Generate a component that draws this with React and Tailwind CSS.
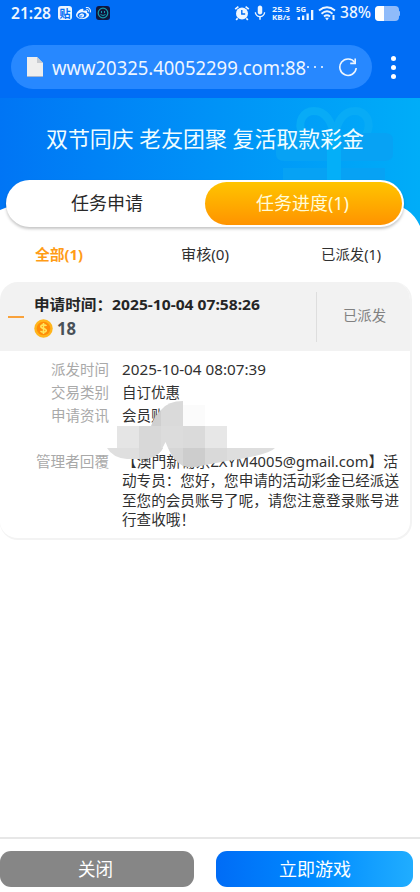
import { FaWeibo } from "react-icons/fa";
import { MdMic } from "react-icons/md";

const details = [
  { label: "派发时间", value: "2025-10-04 08:07:39", width: 144 },
  { label: "交易类别", value: "自订优惠", width: 58 },
  { label: "申请资讯", value: "会员账号", width: 58 },
];

const replyLines = [
  { text: "【澳門新葡京ZXYM4005@gmail.com】活", width: 276 },
  { text: "动专员：您好，您申请的活动彩金已经派送", width: 277 },
  { text: "至您的会员账号了呢，请您注意登录账号进", width: 277 },
  { text: "行查收哦！", width: 73 },
];

// One line of text, stretched or squeezed to a fixed width
function Line({ children, width, size, height = size * 1.4, className = "" }) {
  return (
    <svg width={width} height={height} className={`block shrink-0 overflow-visible ${className}`}>
      <text
        x="0"
        y={height / 2 + size * 0.36}
        textLength={width}
        lengthAdjust="spacingAndGlyphs"
        fontSize={size}
        fill="currentColor"
      >
        {children}
      </text>
    </svg>
  );
}

function StatusBar() {
  return (
    <div className="flex h-[26px] items-center pl-[11px] pr-5">
      <Line width={40} size={16.5} className="font-semibold">21:28</Line>
      <span className="ml-[7px] flex h-[14px] w-[14px] items-center justify-center rounded-[3px] bg-[#eaf5ff] text-[11px] font-bold leading-none text-[#006df5]">
        贴
      </span>
      <FaWeibo className="ml-[4px] h-[15px] w-[15px]" />
      <svg viewBox="0 0 14 14" className="ml-[5px] h-[14px] w-[14px]">
        <rect width="14" height="14" rx="3" fill="#10163d" />
        <circle cx="7" cy="7" r="4.8" fill="none" stroke="#159eac" strokeWidth="1.2" />
        <path d="M5.5 5v2M8.5 5v2M4.5 8.5q2.5 2 5 0" fill="none" stroke="#159eac" />
      </svg>

      <svg viewBox="0 0 16 16" className="ml-auto h-4 w-4">
        <circle cx="8" cy="8.5" r="6" fill="currentColor" />
        <path d="M1.2 4.2L4.4 1.6M14.8 4.2L11.6 1.6M3.6 13.2L2.2 15M12.4 13.2l1.4 1.8" stroke="currentColor" strokeWidth="1.7" />
        <path d="M7.8 5v4h3.4" fill="none" stroke="#006df5" strokeWidth="1.4" />
      </svg>
      <MdMic className="ml-px h-[18px] w-[18px]" />
      <div className="ml-[3px] flex flex-col">
        <Line width={18} size={7.6} height={8.5} className="font-bold">25.3</Line>
        <Line width={18} size={7.6} height={8.5} className="font-bold">KB/s</Line>
      </div>
      <svg viewBox="0 0 18 16" className="ml-[6px] h-4 w-[18px]" fill="currentColor">
        <text x="0" y="6.5" fontSize="7.5" fontWeight="700" textLength="10" lengthAdjust="spacingAndGlyphs">5G</text>
        <path d="M1.5 12H4v3H1.5zM6 10.5h2.3V15H6zM10.5 8.5h2.3V15h-2.3zM15 5h2.3v10H15z" />
      </svg>
      <svg viewBox="0 0 18 16" className="ml-[4px] h-4 w-[18px]" fill="none" stroke="currentColor" strokeWidth="1.9">
        <path d="M1 5.5Q9-1 17 5.5M3.5 8.7Q9 4 14.5 8.7M6 11.5q3-2.4 6 0" />
        <path d="M7 12.8h4L9 15.5z" fill="currentColor" stroke="none" />
        <path d="M15.5 10v5" strokeWidth="2" />
      </svg>
      <Line width={31} size={15.5} className="ml-[4px] font-medium">38%</Line>
      <span className="ml-[4px] flex h-[15px] w-[24px] overflow-hidden rounded-[4px] bg-[#8fbbfa]">
        <span className="h-full w-[9px] bg-white" />
      </span>
      <span className="h-[5px] w-px rounded-r bg-[#8fbbfa]" />
    </div>
  );
}

function AddressBar() {
  return (
    <div className="mt-[19px] flex items-center pl-[11px]">
      <div className="flex h-[44px] w-[361px] items-center rounded-full bg-[#2788ff] pl-[16px]">
        <svg viewBox="0 0 16 20" className="h-5 w-4">
          <path d="M0 0h10l6 6v14H0z" fill="#eeeeee" />
          <path d="M10 0v6h6z" fill="#c8cbd0" />
          <path d="M0 19.5h16" stroke="#a6b6d0" />
        </svg>
        <Line width={254} size={20} height={26} className="ml-[9px] mt-px">www20325.40052299.com:88</Line>
        <span className="ml-[1px] flex w-[16px] justify-between">
          <i className="h-[2px] w-[2px] rounded-full bg-white" />
          <i className="h-[2px] w-[2px] rounded-full bg-white" />
          <i className="h-[2px] w-[2px] rounded-full bg-white" />
        </span>
        <svg viewBox="0 0 20 20" className="ml-[15px] h-5 w-5" fill="none" stroke="currentColor" strokeWidth="1.6">
          <path d="M16.8 5.6A8.2 8.2 0 1 0 18.2 11" />
          <path d="M17.2 1.4v5h-5" />
        </svg>
      </div>
      <div className="ml-[19px] flex flex-col gap-[4px]">
        <i className="h-[5px] w-[5px] rounded-full bg-white" />
        <i className="h-[5px] w-[5px] rounded-full bg-white" />
        <i className="h-[5px] w-[5px] rounded-full bg-white" />
      </div>
    </div>
  );
}

// Faint present behind the headline
function Gift() {
  return (
    <svg viewBox="0 0 118 84" className="absolute left-[276px] top-[9px] h-[84px] w-[118px]">
      <g fill="none" stroke="#08abf6" strokeWidth="8">
        <path d="M27 28C20 14 28 4 38 4c11 0 18 10 20 24" />
        <path d="M90 28C97 14 89 4 79 4 68 4 61 14 59 28" />
      </g>
      <g fill="#07a2f4">
        <path d="M8 26h101q8 0 8 7v14q0 7-8 7H8q-8 0-8-7V33q0-7 8-7z" />
        <path d="M7 61h102v23H7z" />
      </g>
      <path d="M51 26h14v58H51z" fill="#04aff8" />
    </svg>
  );
}

function Coin() {
  return (
    <svg viewBox="0 0 20 20" className="h-[19px] w-[19px]">
      <circle cx="10" cy="10" r="9.7" fill="#ffb51b" />
      <circle cx="10" cy="10" r="7.2" fill="#ff8d08" />
      <path d="M13 7.4C12.5 5.8 7.4 5.5 7.2 8c-.2 2.4 5.8 1.5 5.7 4.1-.2 2.5-5.4 2.2-5.9.4M10 4.2v11.6" fill="none" stroke="#ffe65d" strokeWidth="1.7" />
    </svg>
  );
}

// Blurred-out blocks that hide the account name
function Mosaic() {
  return (
    <svg viewBox="0 0 170 70" className="absolute left-[107px] top-[119px] h-[70px] w-[170px]">
      <path d="M76 4H98V25H76z" fill="#fbfbfb" />
      <path d="M44 25Q48 14 54 9V25z" fill="#cfcfcf" />
      <path d="M54 9Q61 0 76 0V25H54z" fill="#dadada" />
      <path d="M10 25H32V47H10z" fill="#e5e5e5" />
      <path d="M32 25H54V47H32z" fill="#d8d8d8" />
      <path d="M54 25H76V47H61L58.5 41L55 48H54z" fill="#dcdcdc" />
      <path d="M76 25H98V47H76z" fill="#dadada" />
      <path d="M98 25H120V47H98z" fill="#e7e7e7" />
      <path d="M0 47H56Q50 58 34 58H20Q6 57 0 47z" fill="#dfdfdf" />
      <path d="M32 47H56Q50 58 34 58H32z" fill="#d8d8d8" />
      <path d="M61 47H76V65Q66 59 61 47z" fill="#d6d6d6" />
      <path d="M76 47H98V64Q85 68 76 65z" fill="#cdcdcd" />
      <path d="M98 47H120V60L98 64z" fill="#d9d9d9" />
      <path d="M120 47H168Q162 54 120 60z" fill="#dedede" />
    </svg>
  );
}

export default function App() {
  return (
    <div className="flex h-[892px] w-[420px] flex-col overflow-hidden bg-white font-['Noto_Sans','Noto_Sans_CJK_SC',sans-serif]">
      <header className="h-[98px] shrink-0 bg-[#006df5] text-[#eef6ff]">
        <StatusBar />
        <AddressBar />
      </header>

      {/* Banner */}
      <section className="relative h-[141px] shrink-0 bg-linear-to-r from-[#0075f5] to-[#00adf8]">
        <Gift />
        <svg viewBox="0 0 420 43" className="absolute left-0 top-[98px] h-[43px] w-[420px]">
          <path d="M0 14Q10 9 30 9H390Q410 9 420 30V43H0z" fill="white" />
        </svg>
        <h1 className="relative flex justify-center pt-[26px] pr-[11px] text-[#f1fdff]">
          <Line width={318} size={21.3} height={30}>双节同庆 老友团聚 复活取款彩金</Line>
        </h1>
        <div className="relative ml-[6px] mt-[26px] flex h-[47px] w-[398px] rounded-full bg-white p-[2px] shadow-[0_2px_3px_#0000003a]">
          <button className="flex flex-1 items-center justify-center pl-px text-[#292929]">
            <Line width={72} size={18}>任务申请</Line>
          </button>
          <button className="flex w-[197px] items-center justify-center rounded-full bg-linear-to-b from-[#ffc400] to-[#ff9300] pr-[2px] text-[#fffbd8]">
            <Line width={93} size={18}>任务进度(1)</Line>
          </button>
        </div>
      </section>

      {/* Filters */}
      <nav className="flex h-[43px] shrink-0 items-center pb-[10px] pl-[35px] text-[#303030]">
        <Line width={48} size={14.3} className="font-bold text-[#ff9c16]">全部(1)</Line>
        <Line width={48} size={14.3} className="ml-[98px]">审核(0)</Line>
        <Line width={60} size={14.3} className="ml-[92px]">已派发(1)</Line>
      </nav>

      {/* Record */}
      <article className="relative h-[258px] w-[412px] shrink-0 overflow-hidden rounded-[18px] border-b-2 border-r-2 border-[#f3f3f3] bg-white">
        <div className="flex h-[69px] items-center bg-[#f2f2f2]">
          <span className="ml-2 h-[2px] w-[16px] bg-[#f9a23b]" />
          <div className="ml-[10px] flex w-[282px] flex-col">
            <Line width={226} size={14.5} height={21} className="font-bold text-[#252525]">申请时间：2025-10-04 07:58:26</Line>
            <div className="mt-[3px] flex h-[22px] items-center">
              <Coin />
              <Line width={19} size={17} height={22} className="ml-[4px] font-bold text-[#495057]">18</Line>
            </div>
          </div>
          <div className="flex h-[50px] items-center border-l border-[#dedede] pl-[26px] text-[#818181]">
            <Line width={43} size={14.3}>已派发</Line>
          </div>
        </div>

        <div className="flex flex-col pt-[7px]">
          {details.map((item) => (
            <div key={item.label} className="flex h-[23px] items-center pl-[51px]">
              <Line width={58} size={14.4} height={21} className="text-[#a9a9a9]">{item.label}</Line>
              <Line width={item.width} size={14.4} height={21} className="ml-[13px] text-[#303030]">{item.value}</Line>
            </div>
          ))}
        </div>
        <div className="mt-[25px] flex pl-[36px]">
          <Line width={73} size={14.4} height={19.4} className="text-[#a9a9a9]">管理者回覆</Line>
          <div className="ml-[13px] flex flex-col text-[#303030]">
            {replyLines.map((line) => (
              <Line key={line.text} width={line.width} size={14.5} height={19.4}>{line.text}</Line>
            ))}
          </div>
        </div>
        <Mosaic />
      </article>

      {/* Bottom buttons */}
      <footer className="mt-auto flex h-[55px] shrink-0 gap-[22px] border-t-2 border-[#e7e7e7] pt-[12px]">
        <button className="flex h-[36px] w-[194px] items-center justify-center rounded-[11px] bg-[#868686] pr-[3px] text-white">
          <Line width={35} size={17.7}>关闭</Line>
        </button>
        <button className="flex h-[36px] w-[197px] items-center justify-center rounded-[11px] bg-linear-to-r from-[#006cf6] via-[#008aff] to-[#20adff] pt-[2px] text-white">
          <Line width={72} size={18}>立即游戏</Line>
        </button>
      </footer>
    </div>
  );
}
